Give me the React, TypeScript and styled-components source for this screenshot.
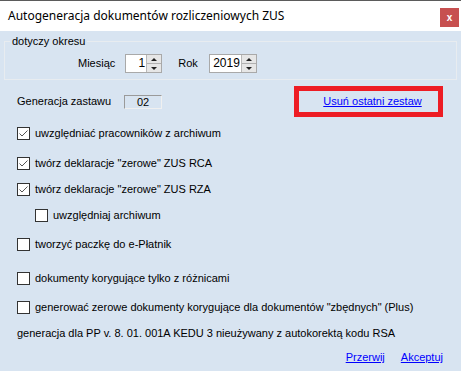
import React from "react";
import styled, { createGlobalStyle } from "styled-components";

const GlobalStyle = createGlobalStyle`
  html, body {
    margin: 0;
    padding: 0;
    background: #d8e4f1;
  }
  body {
    font-family: "Liberation Sans", Arial, sans-serif;
    font-size: 11px;
    color: #000;
  }
`;

const Window = styled.div`
  width: 461px;
  height: 371px;
  display: flex;
  flex-direction: column;
  border-top: 1px solid #5b5b5b;
  box-sizing: border-box;
  overflow: hidden;
`;

const TitleBar = styled.div`
  height: 30px;
  flex: none;
  background: #fff;
  display: flex;
  align-items: center;
  justify-content: space-between;
  padding: 0 2px 0 8px;
`;

const Title = styled.span`
  font-family: "Noto Sans", "Open Sans", sans-serif;
  font-size: 12px;
  color: #000;
  margin-top: -2px;
`;

const CloseButton = styled.div`
  width: 19px;
  height: 19px;
  margin-top: 3px;
  background: #c75050;
  color: #fff;
  font-family: "Liberation Sans", Arial, sans-serif;
  font-weight: bold;
  font-size: 10px;
  display: flex;
  align-items: center;
  justify-content: center;
`;

const Body = styled.div`
  flex: 1;
  display: flex;
  flex-direction: column;
  padding: 4px 0 0;
  background: #d8e4f1;
`;

const GroupBox = styled.fieldset`
  margin: 0 4px;
  padding: 6px 0 6px;
  border: 1px solid #e8ecf0;
  min-width: 0;
`;

const Legend = styled.legend`
  margin-left: 5px;
  padding: 0 2px;
  line-height: 13px;
  font-size: 11px;
`;

const PeriodRow = styled.div`
  display: flex;
  align-items: center;
  padding-left: 73px;
  height: 19px;
`;

const Label = styled.span<{ $gap?: number }>`
  margin-right: ${(p) => p.$gap ?? 10}px;
  line-height: 13px;
`;

const Spin = styled.div<{ $width: number }>`
  width: ${(p) => p.$width}px;
  height: 19px;
  box-sizing: border-box;
  border: 1px solid #a9a9a9;
  background: #fff;
  display: flex;
  margin-right: 16px;
`;

const SpinValue = styled.span`
  flex: 1;
  text-align: right;
  line-height: 17px;
  font-size: 12px;
  padding-right: 1px;
`;

const SpinArrows = styled.div`
  width: 14px;
  display: flex;
  flex-direction: column;
  border-left: 1px solid #b8b8b8;
`;

const SpinHalf = styled.div<{ $down?: boolean }>`
  flex: 1;
  display: flex;
  align-items: center;
  justify-content: center;
  background: #e6e6e6;
  border-top: ${(p) => (p.$down ? "1px solid #b0b0b0" : "none")};
`;

const Arrow = styled.span<{ $down?: boolean }>`
  width: 0;
  height: 0;
  border-left: 3px solid transparent;
  border-right: 3px solid transparent;
  ${(p) =>
    p.$down
      ? "border-top: 3px solid #222;"
      : "border-bottom: 3px solid #222;"}
`;

const Content = styled.div`
  display: flex;
  flex-direction: column;
  padding: 0 18px 0 17px;
`;

const GenRow = styled.div`
  display: flex;
  align-items: center;
  height: 31px;
  margin-top: 6px;
`;

const GenLabel = styled.span`
  width: 107px;
  line-height: 13px;
`;

const GenValue = styled.div`
  width: 38px;
  height: 14px;
  box-sizing: border-box;
  border: 1px solid #9a9a9a;
  border-right-color: #f0f0f0;
  border-bottom-color: #f0f0f0;
  text-align: center;
  line-height: 12px;
`;

const Highlight = styled.div`
  margin-left: auto;
  width: 149px;
  height: 31px;
  box-sizing: border-box;
  border: 5px solid #ed1c24;
  display: flex;
  align-items: center;
  justify-content: center;
  padding-left: 8px;
`;

const Link = styled.a`
  color: #0000ff;
  text-decoration: underline;
  line-height: 13px;
  cursor: pointer;
`;

const CheckRow = styled.label<{ $top: number; $indent?: boolean }>`
  display: flex;
  align-items: center;
  height: 13px;
  margin-top: ${(p) => p.$top}px;
  margin-left: ${(p) => (p.$indent ? 18 : 0)}px;
  gap: 5px;
  line-height: 13px;
  white-space: nowrap;
`;

const Box = styled.span`
  width: 13px;
  height: 13px;
  box-sizing: border-box;
  border: 1px solid #333;
  background: #fff;
  flex: none;
  display: flex;
`;

const Note = styled.div`
  margin-top: 13px;
  line-height: 13px;
  white-space: nowrap;
`;

const Actions = styled.div`
  display: flex;
  justify-content: flex-end;
  gap: 16px;
  margin-top: 11px;
  padding-right: 0;
`;

function CheckBox({ checked }: { checked?: boolean }) {
  return (
    <Box>
      {checked ? (
        <svg width="11" height="11" viewBox="0 0 11 11">
          <path d="M1.5 5.5 L4 8 L9.5 2.5" fill="none" stroke="#555" strokeWidth="1" />
        </svg>
      ) : null}
    </Box>
  );
}

function SpinBox({ value, width }: { value: string; width: number }) {
  return (
    <Spin $width={width}>
      <SpinValue>{value}</SpinValue>
      <SpinArrows>
        <SpinHalf>
          <Arrow />
        </SpinHalf>
        <SpinHalf $down>
          <Arrow $down />
        </SpinHalf>
      </SpinArrows>
    </Spin>
  );
}

const options = [
  { top: 10, label: "uwzględniać pracowników z archiwum", checked: true },
  { top: 17, label: 'twórz deklaracje "zerowe" ZUS RCA', checked: true },
  { top: 13, label: 'twórz deklaracje "zerowe" ZUS RZA', checked: true },
  { top: 13, label: "uwzględniaj archiwum", indent: true },
  { top: 16, label: "tworzyć paczkę do e-Płatnik" },
  { top: 21, label: "dokumenty korygujące tylko z różnicami" },
  {
    top: 16,
    label: 'generować zerowe dokumenty korygujące dla dokumentów "zbędnych" (Plus)',
  },
];

export default function App() {
  return (
    <>
      <GlobalStyle />
      <Window>
        <TitleBar>
          <Title>Autogeneracja dokumentów rozliczeniowych ZUS</Title>
          <CloseButton>x</CloseButton>
        </TitleBar>
        <Body>
          <GroupBox>
            <Legend>dotyczy okresu</Legend>
            <PeriodRow>
              <Label $gap={10}>Miesiąc</Label>
              <SpinBox value="1" width={37} />
              <Label $gap={11}>Rok</Label>
              <SpinBox value="2019" width={48} />
            </PeriodRow>
          </GroupBox>
          <Content>
            <GenRow>
              <GenLabel>Generacja zastawu</GenLabel>
              <GenValue>02</GenValue>
              <Highlight>
                <Link>Usuń ostatni zestaw</Link>
              </Highlight>
            </GenRow>
            {options.map((o, i) => (
              <CheckRow key={i} $top={o.top} $indent={o.indent}>
                <CheckBox checked={o.checked} />
                <span>{o.label}</span>
              </CheckRow>
            ))}
            <Note>
              generacja dla PP v. 8. 01. 001A KEDU 3 nieużywany z autokorektą kodu RSA
            </Note>
            <Actions>
              <Link>Przerwij</Link>
              <Link>Akceptuj</Link>
            </Actions>
          </Content>
        </Body>
      </Window>
    </>
  );
}
